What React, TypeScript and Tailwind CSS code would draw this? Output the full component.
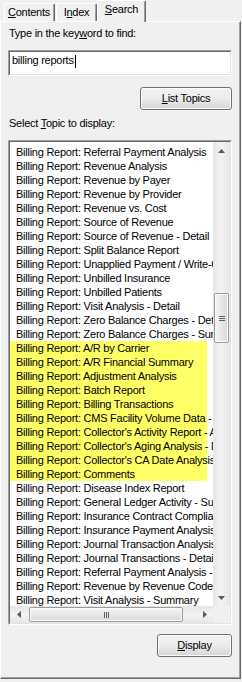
import React from "react";

const topics = [
  "Referral Payment Analysis",
  "Revenue Analysis",
  "Revenue by Payer",
  "Revenue by Provider",
  "Revenue vs. Cost",
  "Source of Revenue",
  "Source of Revenue - Detail",
  "Split Balance Report",
  "Unapplied Payment / Write-Off Analysis",
  "Unbilled Insurance",
  "Unbilled Patients",
  "Visit Analysis - Detail",
  "Zero Balance Charges - Detail",
  "Zero Balance Charges - Summary",
];

const marked = [
  "A/R by Carrier",
  "A/R Financial Summary",
  "Adjustment Analysis",
  "Batch Report",
  "Billing Transactions",
  "CMS Facility Volume Data - Detail",
  "Collector's Activity Report - Archive",
  "Collector's Aging Analysis - Detail",
  "Collector's CA Date Analysis",
  "Comments",
];

const rest = [
  "Disease Index Report",
  "General Ledger Activity - Summary",
  "Insurance Contract Compliance",
  "Insurance Payment Analysis",
  "Journal Transaction Analysis",
  "Journal Transactions - Detail",
  "Referral Payment Analysis - Detail",
  "Revenue by Revenue Code",
  "Visit Analysis - Summary",
];

const Row = ({ text }: { text: string }) => (
  <div className="h-[14px] leading-[14px] pl-[6px] whitespace-nowrap">Billing Report: {text}</div>
);

const Arrow = ({ dir }: { dir: "up" | "down" | "left" | "right" }) => {
  const pts = {
    up: "0,4 3.5,0 7,4",
    down: "0,0 3.5,4 7,0",
    left: "4,0 0,3.5 4,7",
    right: "0,0 4,3.5 0,7",
  }[dir];
  const vert = dir === "up" || dir === "down";
  return (
    <svg width={vert ? 7 : 4} height={vert ? 4 : 7} viewBox={vert ? "0 0 7 4" : "0 0 4 7"}>
      <polygon points={pts} fill="#5a5a5a" />
    </svg>
  );
};

const Button = ({ children, className }: { children: React.ReactNode; className: string }) => (
  <div
    className={
      "h-[23px] flex items-center justify-center rounded-[3px] border border-[#707070] bg-linear-to-b from-[#f3f3f3] via-[#ebebeb] to-[#d6d6d6] shadow-[inset_0_0_0_1px_#fcfcfc] " +
      className
    }
  >
    {children}
  </div>
);

export default function App() {
  return (
    <div className="w-[242px] h-[682px] bg-[#f0f0f0] text-black font-['Liberation_Sans',Arial,sans-serif] text-[11px] tracking-[-0.25px] overflow-hidden">
      {/* tabs */}
      <div className="flex items-end h-[21px]">
        <div className="ml-[4px] w-[51px] h-[18px] pt-[2px] pl-[3px] leading-[13px] border-l border-t border-r border-l-white border-t-white border-r-[#696969] rounded-t-[2px] shadow-[inset_-1px_0_0_#a0a0a0]">
          <span className="underline">C</span>ontents
        </div>
        <div className="ml-[1px] w-[41px] h-[18px] pt-[2px] text-center leading-[13px] border-l border-t border-r border-l-white border-t-white border-r-[#696969] rounded-t-[2px] shadow-[inset_-1px_0_0_#a0a0a0]">
          I<span className="underline">n</span>dex
        </div>
        <div className="relative z-10 -mb-px w-[49px] h-[22px] pt-[2px] text-center leading-[13px] bg-[#f0f0f0] border-l border-t border-r border-l-white border-t-white border-r-[#696969] rounded-t-[2px] shadow-[inset_-1px_0_0_#a0a0a0]">
          <span className="underline">S</span>earch
        </div>
      </div>

      {/* panel */}
      <div className="w-[241px] h-[658px] flex flex-col border border-t-white border-l-white border-r-[#696969] border-b-[#696969] shadow-[inset_-1px_-1px_0_#a0a0a0]">
        <div className="mt-[5px] pl-[8px] h-[13px] leading-[13px]">
          Type in the key<span className="underline">w</span>ord to find:
        </div>

        <div className="mt-[10px] ml-[7px] w-[224px] h-[26px] border border-t-[#a0a0a0] border-l-[#a0a0a0] border-r-white border-b-white">
          <div className="h-full bg-white border border-t-[#696969] border-l-[#696969] border-r-[#e3e3e3] border-b-[#e3e3e3] pl-[2px] pt-[2px] flex items-start">
            <span className="leading-[13px]">billing reports</span>
            <span className="ml-[1px] mt-[1px] w-px h-[13px] bg-black" />
          </div>
        </div>

        <div className="mt-[11px] ml-[7px] w-[224px] flex justify-end">
          <Button className="w-[92px]">
            <span>
              <span className="underline">L</span>ist Topics
            </span>
          </Button>
        </div>

        <div className="mt-[7px] pl-[8px] h-[13px] leading-[13px]">
          Select <span className="underline">T</span>opic to display:
        </div>

        {/* list box */}
        <div className="mt-[10px] ml-[7px] w-[224px] h-[485px] border border-t-[#a0a0a0] border-l-[#a0a0a0] border-r-white border-b-white">
          <div className="h-full border border-t-[#696969] border-l-[#696969] border-r-[#e3e3e3] border-b-[#e3e3e3] grid grid-cols-[203px_17px] grid-rows-[464px_17px]">
            <div className="bg-white overflow-hidden pt-[3px]">
              {topics.map((t) => (
                <Row key={t} text={t} />
              ))}
              <div className="w-[197px] bg-[#ffff66]">
                {marked.map((t) => (
                  <Row key={t} text={t} />
                ))}
              </div>
              {rest.map((t) => (
                <Row key={t} text={t} />
              ))}
            </div>

            {/* vertical scrollbar */}
            <div className="flex flex-col bg-linear-to-r from-[#e6e6e6] via-[#f3f3f3] to-[#e6e6e6]">
              <div className="h-[17px] flex items-center justify-center">
                <Arrow dir="up" />
              </div>
              <div className="flex-1">
                <div className="mt-[134px] mx-[1px] h-[50px] rounded-[2px] border border-[#9b9b9b] bg-linear-to-r from-[#f6f6f6] to-[#d9d9d9] shadow-[inset_0_0_0_1px_#fbfbfb] flex flex-col items-center justify-center gap-[1px]">
                  <div className="w-[6px] h-px bg-[#5f5f5f]" />
                  <div className="w-[6px] h-px bg-[#5f5f5f]" />
                  <div className="w-[6px] h-px bg-[#5f5f5f]" />
                </div>
              </div>
              <div className="h-[17px] flex items-center justify-center">
                <Arrow dir="down" />
              </div>
            </div>

            {/* horizontal scrollbar */}
            <div className="flex bg-linear-to-b from-[#e6e6e6] via-[#f3f3f3] to-[#e6e6e6]">
              <div className="w-[17px] flex items-center justify-center">
                <Arrow dir="left" />
              </div>
              <div className="flex-1 py-[1px]">
                <div className="ml-[2px] w-[154px] h-full rounded-[2px] border border-[#9b9b9b] bg-linear-to-b from-[#f6f6f6] to-[#d9d9d9] shadow-[inset_0_0_0_1px_#fbfbfb] flex items-center justify-center gap-[1px]">
                  <div className="w-px h-[6px] bg-[#5f5f5f]" />
                  <div className="w-px h-[6px] bg-[#5f5f5f]" />
                  <div className="w-px h-[6px] bg-[#5f5f5f]" />
                </div>
              </div>
              <div className="w-[17px] flex items-center justify-center">
                <Arrow dir="right" />
              </div>
            </div>
            <div className="bg-[#f0f0f0]" />
          </div>
        </div>

        <div className="mt-[9px] ml-[7px] w-[224px] flex justify-end">
          <Button className="w-[75px]">
            <span>
              <span className="underline">D</span>isplay
            </span>
          </Button>
        </div>
      </div>
    </div>
  );
}
